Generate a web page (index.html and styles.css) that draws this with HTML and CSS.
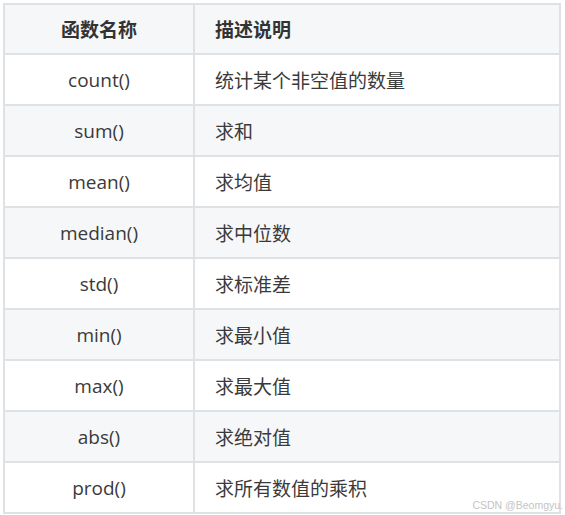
FILE: index.html
```html
<!DOCTYPE html>
<html lang="zh-CN">
<head>
<meta charset="utf-8">
<link rel="stylesheet" href="styles.css">
</head>
<body>
<div class="wrap">
  <table class="fn-table">
    <thead>
      <tr><th class="c1">函数名称</th><th class="c2">描述说明</th></tr>
    </thead>
    <tbody>
      <tr><td class="c1">count()</td><td class="c2">统计某个非空值的数量</td></tr>
      <tr><td class="c1">sum()</td><td class="c2">求和</td></tr>
      <tr><td class="c1">mean()</td><td class="c2">求均值</td></tr>
      <tr><td class="c1">median()</td><td class="c2">求中位数</td></tr>
      <tr><td class="c1">std()</td><td class="c2">求标准差</td></tr>
      <tr><td class="c1">min()</td><td class="c2">求最小值</td></tr>
      <tr><td class="c1">max()</td><td class="c2">求最大值</td></tr>
      <tr><td class="c1">abs()</td><td class="c2">求绝对值</td></tr>
      <tr><td class="c1">prod()</td><td class="c2">求所有数值的乘积</td></tr>
    </tbody>
  </table>
  <span class="watermark">CSDN @Beomgyu.</span>
</div>
</body>
</html>
```
FILE: styles.css
```css
html, body {
  margin: 0;
  padding: 0;
  background: #ffffff;
}
.wrap {
  position: relative;
  padding: 3px;
  width: 558px;
}
.fn-table {
  border-collapse: separate;
  border-spacing: 0;
  width: 558px;
  table-layout: fixed;
  border-top: 2px solid #dfe2e5;
  border-left: 2px solid #dfe2e5;
  font-family: "Open Sans", "Noto Sans CJK SC", sans-serif;
  font-size: 19px;
  color: #3a3a3a;
}
.fn-table th, .fn-table td {
  border-right: 2px solid #dfe2e5;
  border-bottom: 2px solid #dfe2e5;
  padding: 0;
  box-sizing: border-box;
}
.fn-table th {
  height: 50px;
  background: #f6f7f8;
  font-weight: 700;
  color: #333333;
}
.fn-table td {
  height: 51px;
}
.fn-table tbody tr:nth-child(2n) td {
  background: #f6f7f8;
}
.c1 {
  width: 190px;
  text-align: center;
}
.c2 {
  text-align: left;
  padding-left: 20px !important;
}
.watermark {
  position: absolute;
  right: 1px;
  bottom: 6px;
  font-family: "Liberation Sans", sans-serif;
  font-size: 10.5px;
  color: #c4c4c4;
}
```
